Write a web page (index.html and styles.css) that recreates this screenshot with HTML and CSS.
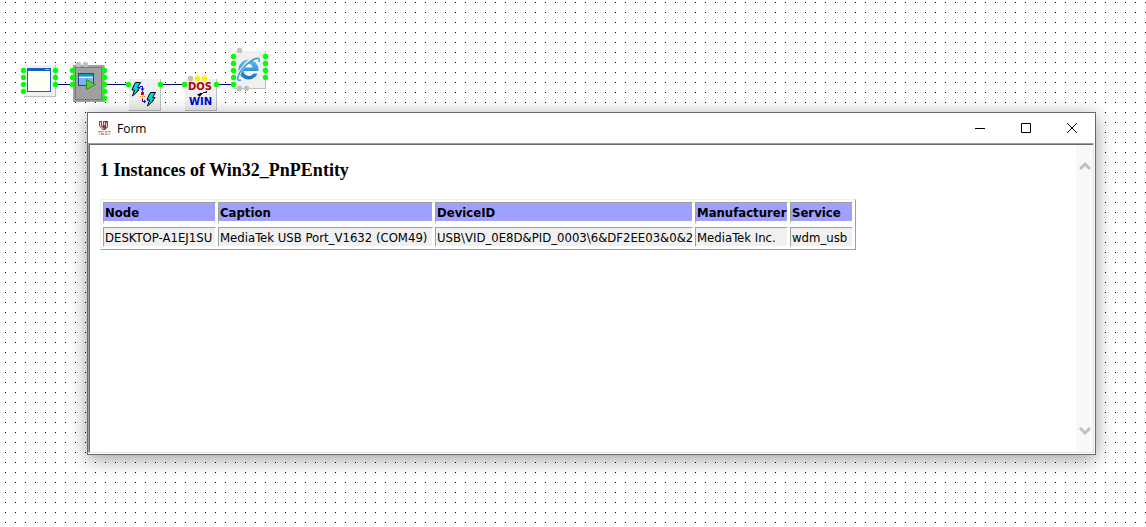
FILE: index.html
```
<!DOCTYPE html>
<html lang="en">
<head>
  <meta charset="UTF-8" />
  <meta name="viewport" content="width=device-width, initial-scale=1.0" />
  <title>Form</title>
  <link rel="stylesheet" href="styles.css">
</head>
<body>
  <main class="canvas">
    <svg class="scheme" width="280" height="112" viewBox="0 0 280 112" role="img" aria-label="Component scheme">
      <defs>
        <circle id="pin" cx=".5" cy=".5" r="2.700" />
        <linearGradient id="ie" x1="0" y1="0" x2="0" y2="1">
          <stop offset="0" stop-color="#62c0f0" />
          <stop offset="1" stop-color="#1670c0" />
        </linearGradient>
      </defs>

      <!-- links -->
      <path d="M55 84.500H72M104 84.500H128M160 84.500H184M216 84.500H233" stroke="#000080" />

      <!-- main form -->
      <rect x="24" y="65" width="32" height="32" fill="#c0c0c0" />
      <rect x="24" y="65" width="31" height="31" fill="#f0f0f0" />
      <rect x="27.500" y="68.500" width="23" height="23" fill="#fffff8" stroke="#1560bd" />
      <path d="M27 68h24v3H27z" fill="#1560bd" />
      <path d="M45 69h4v1h-4z" fill="#a9c4e8" />
      <path d="M49 69h2v1h-2z" fill="#e02020" />

      <!-- console process, selected -->
      <rect x="73" y="65" width="32" height="37" fill="#a0a0a0" />
      <path d="M104.500 65V102" stroke="#c0c0c0" />
      <rect x="75.500" y="67.500" width="26" height="32" fill="none" stroke="#505050" stroke-dasharray="1 1" />
      <rect x="78.500" y="73.500" width="15" height="12" fill="#7eb2ec" stroke="#174a80" />
      <path d="M79 74h14v2H79z" fill="#00a0b0" />
      <path d="M79 77h14v1H79z" fill="#dcecff" />
      <path d="M86.500 79.500v10l9-5z" fill="#5cc93a" stroke="#2b9020" />

      <!-- event thread -->
      <rect x="129" y="79" width="32" height="32" fill="#c0c0c0" />
      <rect x="129" y="79" width="31" height="31" fill="#f0f0f0" />
      <g fill="#00d8e8" stroke="#000">
        <path id="bolt" d="M135.500 82.500h5l-3 5h2.500l-2.500 3h1l-6 5.500 2-6h-2.500l1.500-4z" />
        <use href="#bolt" x="15" y="10" />
      </g>
      <path d="M140 86.500h2.500v3M142.500 98v3.500h3" fill="none" stroke="#0000e0" />
      <path d="M140.500 88.500h4l-2 2.500zM144 99.500v4l2-2z" fill="#0000e0" />
      <path d="M141 92h3v3h-3zM142 91h1v1h-1z" fill="#e00010" />
      <path d="M140 96h1v1h-1zM142 96h1v1h-1zM144 96h1v1h-1zM142 98h1v1h-1z" fill="#e07020" />

      <!-- encoding converter -->
      <rect x="185" y="79" width="32" height="32" fill="#c0c0c0" />
      <rect x="185" y="79" width="31" height="31" fill="#f0f0f0" />
      <text class="label dos" x="188" y="90">DOS</text>
      <text class="label win" x="189" y="105">WIN</text>
      <path d="M206.500 91v1.500h-3l-1 1h-3" fill="none" stroke="#000" />
      <path d="M197 94h5l-2.500 3z" />

      <!-- browser -->
      <rect x="234" y="51" width="32" height="38" fill="#c0c0c0" />
      <rect x="234" y="51" width="31" height="37" fill="#f0f0f0" />
      <circle cx="248.500" cy="69.500" r="10" fill="url(#ie)" />
      <path d="M243.500 67.500c1-5 8.500-5 9 0zM243.500 71h15v2.500h-5c-2.500 4-9 3-10-2.500z" fill="#f4faff" />
      <path d="M240 80c-5 1-1-9 6-16s15-9 13-2" fill="none" stroke="#f0f0f0" stroke-width="3" />
      <path d="M241 80c-6 2-3-7 4-14s16-11 14-4" fill="none" stroke="#3398dd" stroke-width="1.500" />

      <!-- connection points -->
      <g fill="#00ff00">
        <use href="#pin" x="23" y="70" /><use href="#pin" x="23" y="77" /><use href="#pin" x="23" y="84" /><use href="#pin" x="23" y="91" />
        <use href="#pin" x="55" y="70" /><use href="#pin" x="55" y="77" /><use href="#pin" x="55" y="84" />
        <use href="#pin" x="72" y="70" /><use href="#pin" x="72" y="77" /><use href="#pin" x="72" y="84" />
        <use href="#pin" x="104" y="70" /><use href="#pin" x="104" y="77" /><use href="#pin" x="104" y="84" /><use href="#pin" x="104" y="91" /><use href="#pin" x="104" y="98" />
        <use href="#pin" x="128" y="84" /><use href="#pin" x="160" y="84" />
        <use href="#pin" x="184" y="84" /><use href="#pin" x="216" y="84" />
        <use href="#pin" x="233" y="56" /><use href="#pin" x="233" y="63" /><use href="#pin" x="233" y="70" /><use href="#pin" x="233" y="77" /><use href="#pin" x="233" y="84" />
        <use href="#pin" x="265" y="56" /><use href="#pin" x="265" y="63" /><use href="#pin" x="265" y="70" /><use href="#pin" x="265" y="77" />
      </g>
      <g fill="#c0c0c0">
        <use href="#pin" x="78" y="64" /><use href="#pin" x="85" y="64" />
        <use href="#pin" x="190" y="78" />
        <use href="#pin" x="239" y="50" /><use href="#pin" x="239" y="88" /><use href="#pin" x="246" y="88" />
      </g>
      <g fill="#fff000">
        <use href="#pin" x="197" y="78" /><use href="#pin" x="204" y="78" />
      </g>
    </svg>

    <section class="window">
      <header class="titlebar">
        <svg class="app-icon" width="14" height="16" viewBox="0 0 14 16" aria-hidden="true">
          <path d="M2 1h3v4l1 1V1h5v6l-3 3H6L2 6z" fill="#983840" />
          <path d="M3.500 2v4l3 3M7.500 2v3M9.500 3v4" fill="none" stroke="#f0dcdc" />
          <text class="badge" x="1" y="15">TEST</text>
        </svg>
        <h1 class="title">Form</h1>
        <button class="control" type="button" aria-label="Minimize">
          <svg width="10" height="10" viewBox="0 0 10 10"><path d="M0 5.500h10" /></svg>
        </button>
        <button class="control" type="button" aria-label="Maximize">
          <svg width="10" height="10" viewBox="0 0 10 10"><path d="M.5.5h9v9h-9z" /></svg>
        </button>
        <button class="control" type="button" aria-label="Close">
          <svg width="10" height="10" viewBox="0 0 10 10"><path d="M0 0l10 10M10 0L0 10" /></svg>
        </button>
      </header>

      <div class="view">
        <div class="document">
          <h2>1 Instances of Win32_PnPEntity</h2>
          <table>
            <thead>
              <tr>
                <th class="node">Node</th>
                <th class="caption">Caption</th>
                <th class="device">DeviceID</th>
                <th class="maker">Manufacturer</th>
                <th class="service">Service</th>
              </tr>
            </thead>
            <tbody>
              <tr>
                <td>DESKTOP-A1EJ1SU</td>
                <td>MediaTek USB Port_V1632 (COM49)</td>
                <td>USB\VID_0E8D&amp;PID_0003\6&amp;DF2EE03&amp;0&amp;2</td>
                <td>MediaTek Inc.</td>
                <td>wdm_usb</td>
              </tr>
            </tbody>
          </table>
        </div>
        <div class="scrollbar" aria-hidden="true">
          <svg width="12" height="10" viewBox="0 0 12 10"><path d="M1 8l5-5 5 5" /></svg>
          <svg width="12" height="10" viewBox="0 0 12 10"><path d="M1 2l5 5 5-5" /></svg>
        </div>
      </div>
    </section>
  </main>
</body>
</html>
```
FILE: styles.css
```
* {
  box-sizing: border-box;
}
body {
  margin: 0;
  color: #000;
}
.canvas {
  position: relative;
  min-height: 100vh;
  background: conic-gradient(from 270deg at 1px 1px, #000 90deg, #fff 0) 5px 2px / 10px 10px;
}
.scheme {
  display: block;
}
.label {
  font: bold 10px "DejaVu Sans", sans-serif;
}
.dos {
  fill: #b00000;
}
.win {
  fill: #0000d8;
}

/* Form window */
.window {
  position: absolute;
  inset: 112px 50px 72px 87px;
  display: flex;
  flex-direction: column;
  background: #fff;
  border: 1px solid #696969;
  box-shadow: 0 4px 18px rgba(0, 0, 0, 0.4);
}
.titlebar {
  display: flex;
  align-items: center;
  height: 30px;
  padding-left: 9px;
}
.app-icon {
  margin-right: 6px;
}
.badge {
  font: 5px "Liberation Sans", sans-serif;
  fill: #a04048;
}
.title {
  flex: 1;
  margin: 0;
  font: 12px "Open Sans", sans-serif;
}
.control {
  width: 46px;
  height: 30px;
  padding: 0;
  border: 0;
  background: none;
}
.control svg {
  display: block;
  margin: auto;
  fill: none;
  stroke: #000;
}
.view {
  flex: 1;
  display: flex;
  margin-right: 1px;
  margin-bottom: 1px;
  border: 1px solid;
  border-color: #a0a0a0 #e3e3e3 #e3e3e3 #a0a0a0;
  box-shadow: inset 1px 1px #696969;
}
.document {
  flex: 1;
  padding: 16px 11px;
}
h2 {
  margin: 0 0 19px;
  font: bold 18px/20px "Liberation Serif", serif;
}
table {
  table-layout: fixed;
  width: 756px;
  border: 1px solid;
  border-color: #f0f0f0 #a0a0a0 #a0a0a0 #f0f0f0;
  border-spacing: 2px;
  font: 13px/17px "DejaVu Sans Condensed", sans-serif;
}
th,
td {
  padding: 1px 1px 0;
  border: 1px solid;
  border-color: #a0a0a0 #fff #fff #a0a0a0;
  text-align: left;
  white-space: nowrap;
}
th {
  background: #a0a0ff;
  border-bottom-width: 4px;
}
td {
  background: #f0f0f0;
}
.node {
  width: 113px;
}
.caption {
  width: 215px;
}
.device {
  width: 258px;
}
.maker {
  width: 93px;
}
.service {
  width: 63px;
}
.scrollbar {
  display: flex;
  flex-direction: column;
  align-items: center;
  justify-content: space-between;
  width: 17px;
  margin-top: 1px;
  padding: 16px 0;
  background: #f8f8f8;
}
.scrollbar path {
  fill: none;
  stroke: #c0c0c0;
  stroke-width: 3px;
}
```
